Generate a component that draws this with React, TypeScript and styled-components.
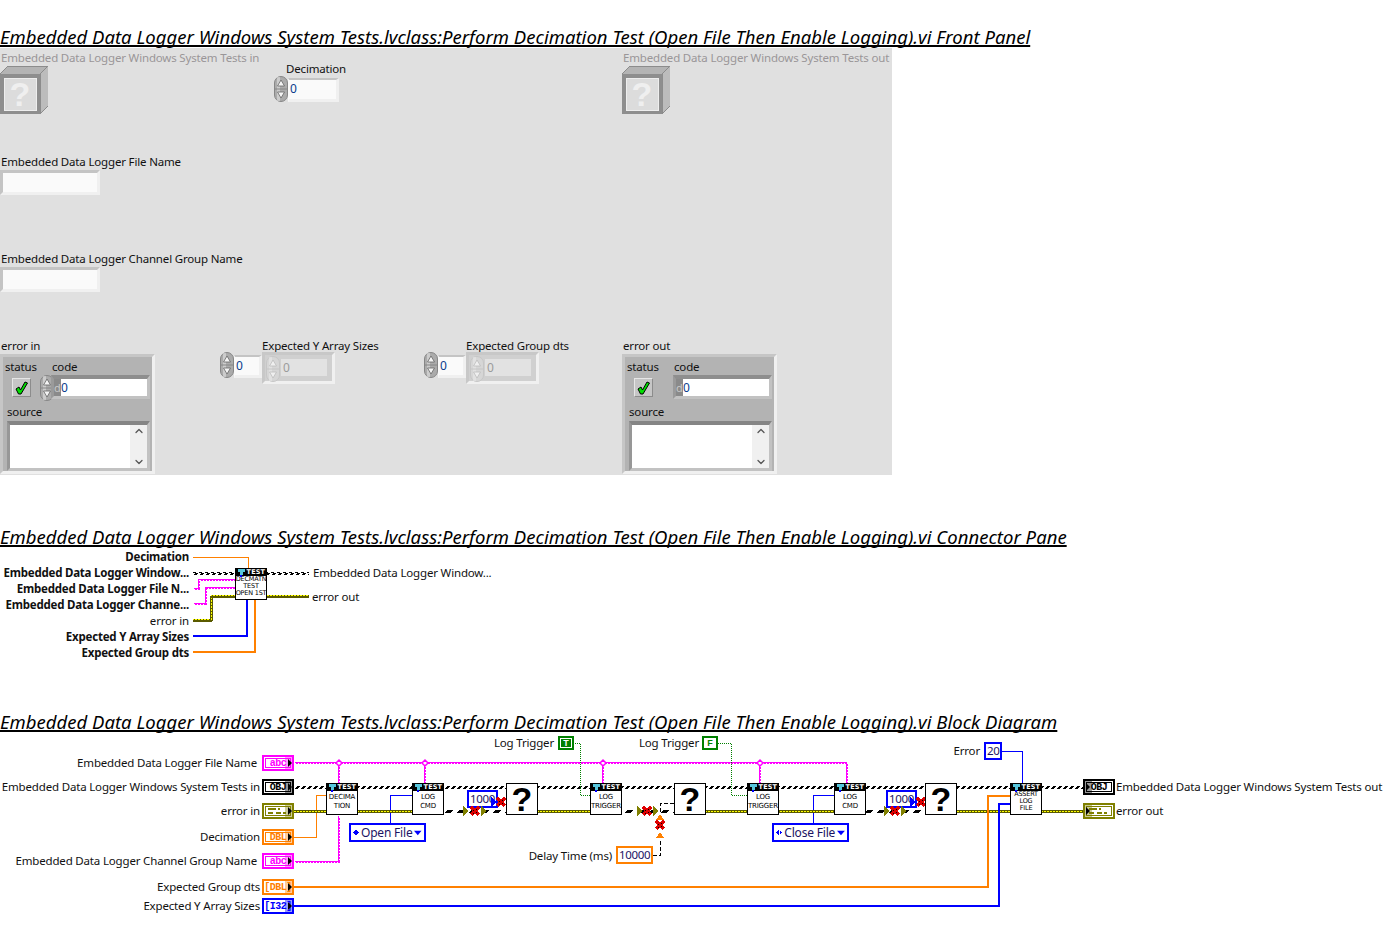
import React from "react";
import styled, { createGlobalStyle, css } from "styled-components";
import { ChevronDown, ChevronUp } from "lucide-react";

const GlobalStyle = createGlobalStyle`
  html, body {
    margin: 0;
    padding: 0;
    background: #fff;
  }
  body {
    font-family: "Noto Sans", "Liberation Sans", sans-serif;
    color: #111;
  }
`;

const MAGENTA = "#ff00ff";
const ORANGE = "#ff8000";
const BLUE = "#0000ff";
const GREEN = "#008000";
const OLIVE = "#808000";

const PANEL_TOP = 48;
const PANE_TOP = 549;
const DIAGRAM_TOP = 736;

type At = { $x: number; $y: number };

const placedIn = (origin: number) => css<At>`
  position: absolute;
  left: ${(p) => p.$x}px;
  top: ${(p) => p.$y - origin}px;
`;

const labelFont = css`
  font-size: 11.5px;
  letter-spacing: -0.17px;
  line-height: 16px;
  white-space: nowrap;
`;

const Page = styled.div`
  width: 1385px;
  height: 939px;
  padding-top: 27px;
  box-sizing: border-box;
  overflow: hidden;
`;

const Title = styled.h2<{ $gap?: number }>`
  margin: ${(p) => p.$gap ?? 0}px 0 0;
  height: 21px;
  font-family: "Noto Sans", sans-serif;
  font-size: 18.5px;
  font-style: italic;
  font-weight: 400;
  line-height: 20px;
  letter-spacing: 0.025px;
  white-space: nowrap;
  color: #000;
  text-decoration: underline;
  text-decoration-thickness: 2px;
  text-decoration-skip-ink: none;
  text-underline-offset: 1px;
`;

const FrontPanel = styled.div`
  position: relative;
  width: 892px;
  height: 427px;
  background: #e0e0e0;
  overflow: hidden;
`;

const ConnectorPane = styled.div`
  position: relative;
  height: 110px;
  margin-top: 1px;
`;

const BlockDiagram = styled.div`
  position: relative;
  height: 190px;
  margin-top: 3px;
`;

const WireLayer = styled.svg`
  position: absolute;
  inset: 0;
  width: 100%;
  height: 100%;
  shape-rendering: crispEdges;
`;

const Patterns = styled.svg`
  display: block;
  width: 0;
  height: 0;
`;

/* ---------- front panel ---------- */

const PanelLabel = styled.span<At & { $muted?: boolean }>`
  ${placedIn(PANEL_TOP)};
  ${labelFont};
  color: ${(p) => (p.$muted ? "#9a9698" : "#111")};
`;

const PanelItem = styled.div<At>`
  ${placedIn(PANEL_TOP)};
`;

const StringBox = styled.div`
  width: 100px;
  height: 25px;
  box-sizing: border-box;
  background: #fafafa;
  border-style: solid;
  border-width: 3px;
  border-color: #c4c4c4 #f0f0f0 #f0f0f0 #c4c4c4;
`;

const NumericRow = styled.div`
  display: flex;
  align-items: flex-start;
`;

const NumericBox = styled.div<{ $width: number; $height: number; $top: number }>`
  width: ${(p) => p.$width}px;
  height: ${(p) => p.$height}px;
  margin-top: ${(p) => p.$top}px;
  box-sizing: border-box;
  padding-left: 1px;
  background: #fafafa;
  border-style: solid;
  border-width: 2px 3px 3px 1px;
  border-color: #c4c4c4 #f0f0f0 #f0f0f0 #fafafa;
  font-size: 12px;
  line-height: 18px;
  color: #0b3c8c;
`;

const ArrayFrame = styled.div`
  display: flex;
  width: 73px;
  height: 32px;
  box-sizing: border-box;
  padding: 1px 5px 0 1px;
  background: #d0d0d0;
  border-style: solid;
  border-width: 3px;
  border-color: #c8c8c8 #f0f0f0 #f0f0f0 #c8c8c8;
`;

const ArrayElement = styled.div`
  width: 47px;
  height: 17px;
  margin: 3px 0 0 1px;
  padding-left: 2px;
  box-sizing: border-box;
  background: #e2e2e2;
  font-size: 12px;
  line-height: 18px;
  color: #9b9b9b;
`;

const Cluster = styled.div`
  width: 155px;
  height: 120px;
  box-sizing: border-box;
  padding: 2px 2px 0 2px;
  display: flex;
  flex-direction: column;
  background: #b3b3b3;
  border-style: solid;
  border-width: 3px;
  border-color: #c6c6c6 #f0f0f0 #f0f0f0 #c6c6c6;
`;

const ClusterTop = styled.div`
  display: grid;
  grid-template-columns: 33px 1fr;
  height: 45px;
`;

const ClusterText = styled.div<{ $indent: number }>`
  ${labelFont};
  margin-left: ${(p) => p.$indent}px;
  height: 16px;
  color: #111;
`;

const StatusLed = styled.div`
  width: 19px;
  height: 19px;
  margin: 3px 0 0 7px;
  box-sizing: border-box;
  display: flex;
  align-items: center;
  justify-content: center;
  background: #c6c6c6;
  border-style: solid;
  border-width: 1px;
  border-color: #e6e6e6 #8c8c8c #8c8c8c #e6e6e6;
`;

const CodeRow = styled.div<{ $indent: number }>`
  display: flex;
  align-items: flex-start;
  margin-left: ${(p) => p.$indent}px;
`;

const CodeBox = styled.div`
  display: flex;
  flex: none;
  width: 99px;
  height: 24px;
  margin-left: -3px;
  box-sizing: border-box;
  background: #fff;
  border-style: solid;
  border-width: 4px 3px 3px 3px;
  border-color: #8e8e8e #c2c2c2 #c2c2c2 #9a9a9a;
  font-size: 12px;
  line-height: 18px;
  color: #0b3c8c;
`;

const RadixTab = styled.span`
  width: 7px;
  background: #8a8a8a;
  color: #c8c8c8;
  font-size: 11px;
  line-height: 18px;
`;

const SourceBox = styled.div`
  display: flex;
  justify-content: flex-end;
  width: 143px;
  height: 51px;
  margin: 1px 0 0 2px;
  box-sizing: border-box;
  background: #fff;
  border-style: solid;
  border-width: 4px 3px 3px 3px;
  border-color: #858585 #c2c2c2 #c2c2c2 #979797;
`;

const ScrollTrack = styled.div`
  width: 17px;
  display: flex;
  flex-direction: column;
  align-items: center;
  justify-content: space-between;
  background: #f0f0f0;
  color: #555;
`;

const Spinner = ({ muted }: { muted?: boolean }) => {
  const shell = muted ? "#d6d6d6" : "#ababab";
  const edge = muted ? "#c6c6c6" : "#868686";
  const mark = muted ? "#efefef" : "#f4f4f4";
  const line = muted ? "#bdbdbd" : "#666";
  return (
    <svg width="14" height="26" viewBox="0 0 14 26" style={{ flex: "none" }}>
      <rect x="0.5" y="0.5" width="13" height="25" rx="6.5" fill={shell} stroke={edge} />
      <rect x="3" y="1" width="3" height="24" fill={mark} opacity="0.45" />
      <path d="M1 13h12" stroke={edge} />
      <path d="M7 4 L10.5 10 H3.5 Z" fill={mark} stroke={line} strokeWidth="0.8" />
      <path d="M7 22 L10.5 16 H3.5 Z" fill={mark} stroke={line} strokeWidth="0.8" />
    </svg>
  );
};

const CheckMark = () => (
  <svg width="13" height="14" viewBox="0 0 13 14">
    <path d="M1 8 L4 6 L5.5 9 L10 1 L12.5 2 L6 13 L3.5 13 Z" fill="#00e000" stroke="#000" strokeWidth="1" />
  </svg>
);

const ClassControl = () => (
  <svg width="48" height="48" viewBox="0 0 48 48" shapeRendering="crispEdges">
    <path d="M0 8 L8 0 H48 L40 8 Z" fill="#b4b4b4" stroke="#8c8c8c" />
    <path d="M40 8 L48 0 V40 L40 48 Z" fill="#bcbcbc" stroke="#8c8c8c" />
    <rect x="0" y="8" width="40" height="40" fill="#8e8e8e" />
    <rect x="4" y="12" width="32" height="32" fill="#dcdcdc" stroke="#eeeeee" />
    <text x="20" y="40" textAnchor="middle" fontFamily="Liberation Sans" fontWeight="700" fontSize="34" fill="#efefef">?</text>
  </svg>
);

const ErrorCluster = ({ label, x, input }: { label: string; x: number; input?: boolean }) => (
  <>
    <PanelLabel $x={x + 1} $y={338}>{label}</PanelLabel>
    <PanelItem $x={x} $y={354}>
      <Cluster>
        <ClusterTop>
          <div>
            <ClusterText $indent={0}>status</ClusterText>
            <StatusLed><CheckMark /></StatusLed>
          </div>
          <div>
            <ClusterText $indent={14}>code</ClusterText>
            <CodeRow $indent={input ? 2 : 16}>
              {input && <Spinner />}
              <CodeBox>
                <RadixTab>d</RadixTab>
                0
              </CodeBox>
            </CodeRow>
          </div>
        </ClusterTop>
        <ClusterText $indent={2}>source</ClusterText>
        <SourceBox>
          <ScrollTrack>
            <ChevronUp size={12} strokeWidth={2.5} />
            <ChevronDown size={12} strokeWidth={2.5} />
          </ScrollTrack>
        </SourceBox>
      </Cluster>
    </PanelItem>
  </>
);

const ArrayControl = ({ label, x }: { label: string; x: number }) => (
  <>
    <PanelLabel $x={x + 42} $y={338}>{label}</PanelLabel>
    <PanelItem $x={x} $y={352}>
      <NumericRow>
        <Spinner />
        <NumericBox $width={28} $height={23} $top={3}>0</NumericBox>
        <ArrayFrame>
          <Spinner muted />
          <ArrayElement>0</ArrayElement>
        </ArrayFrame>
      </NumericRow>
    </PanelItem>
  </>
);

/* ---------- wires ---------- */

const Line = ({ d, c, w = 1 }: { d: string; c: string; w?: number }) => (
  <path d={d} fill="none" stroke={c} strokeWidth={w} />
);

const ClassWire = ({ x1, x2, y }: { x1: number; x2: number; y: number }) => (
  <rect x={x1} y={y - 1} width={x2 - x1} height={3} fill="url(#classHatch)" />
);

const BrokenWire = ({ x1, x2, y }: { x1: number; x2: number; y: number }) => (
  <rect x={x1} y={y - 1} width={x2 - x1} height={3} fill="url(#brokenHatch)" />
);

const ErrorWire = ({ x1, x2, y }: { x1: number; x2: number; y: number }) => (
  <rect x={x1} y={y - 1} width={x2 - x1} height={3} fill="url(#errorHatch)" />
);

const ErrorRise = ({ x, y1, y2 }: { x: number; y1: number; y2: number }) => (
  <rect x={x - 1} y={y1} width={3} height={y2 - y1} fill="url(#errorRise)" />
);

// string wires read as a solid line with a row of dots beside it
const StringWire = ({ d }: { d: string }) => (
  <g transform="translate(0.5 0.5)">
    <path d={d} fill="none" stroke={MAGENTA} strokeWidth="1" />
    <path d={d} transform="translate(1 1)" fill="none" stroke={MAGENTA} strokeWidth="1" strokeDasharray="2 1" />
  </g>
);

const Junction = ({ x, y }: { x: number; y: number }) => (
  <path d={`M${x - 3} ${y} L${x} ${y - 3} L${x + 3} ${y} L${x} ${y + 3} Z`} fill="#fff" stroke={MAGENTA} strokeWidth="1.5" shapeRendering="auto" />
);

const Flow = ({ x, y, c, up }: { x: number; y: number; c: string; up?: boolean }) => (
  <polygon
    points={up ? `${x - 4},${y + 3} ${x + 4},${y + 3} ${x},${y - 3}` : `${x - 3},${y - 5} ${x - 3},${y + 5} ${x + 3},${y}`}
    fill={c}
  />
);

const Cross = ({ x, y }: { x: number; y: number }) => (
  <g>
    <path d={`M${x - 4} ${y - 4} L${x + 4} ${y + 4} M${x + 4} ${y - 4} L${x - 4} ${y + 4}`} stroke="#e00000" strokeWidth="3.5" fill="none" />
    <path d={`M${x - 2} ${y - 1} h1 M${x + 1} ${y + 1} h1 M${x + 1} ${y - 2} h1 M${x - 2} ${y + 2} h1`} stroke="#000" strokeWidth="1" fill="none" />
  </g>
);

const WirePatterns = () => (
  <Patterns aria-hidden="true">
    <defs>
      <pattern id="classHatch" width="6" height="3" patternUnits="userSpaceOnUse">
        <rect x="3" y="0" width="3" height="1" fill="#000" />
        <rect x="2" y="1" width="3" height="1" fill="#000" />
        <rect x="1" y="2" width="3" height="1" fill="#000" />
      </pattern>
      <pattern id="brokenHatch" width="12" height="3" patternUnits="userSpaceOnUse">
        <rect x="3" y="0" width="6" height="1" fill="#000" />
        <rect x="2" y="1" width="6" height="1" fill="#000" />
        <rect x="1" y="2" width="6" height="1" fill="#000" />
      </pattern>
      <pattern id="errorHatch" width="3" height="3" patternUnits="userSpaceOnUse">
        <rect width="3" height="3" fill="#5a5a00" />
        <rect x="0" y="1" width="2" height="1" fill="#ffff00" />
      </pattern>
      <pattern id="errorRise" width="3" height="3" patternUnits="userSpaceOnUse">
        <rect width="3" height="3" fill="#5a5a00" />
        <rect x="1" y="0" width="1" height="2" fill="#ffff00" />
      </pattern>
    </defs>
  </Patterns>
);

/* ---------- connector pane ---------- */

const PaneLabel = styled.span<At & { $bold?: boolean; $left?: boolean }>`
  ${placedIn(PANE_TOP)};
  ${labelFont};
  letter-spacing: ${(p) => (p.$bold ? -0.22 : -0.17)}px;
  font-weight: ${(p) => (p.$bold ? 700 : 400)};
  transform: translate(${(p) => (p.$left ? "0" : "-100%")}, -8px);
`;

const PanePlace = styled.div<At>`
  ${placedIn(PANE_TOP)};
`;

/* ---------- block diagram ---------- */

const DiagramLabel = styled.span<At & { $left?: boolean }>`
  ${placedIn(DIAGRAM_TOP)};
  ${labelFont};
  transform: translate(${(p) => (p.$left ? "0" : "-100%")}, -8px);
`;

const DiagramPlace = styled.div<At>`
  ${placedIn(DIAGRAM_TOP)};
`;

const ViFrame = styled.div`
  position: relative;
  width: 32px;
  height: 32px;
  box-sizing: border-box;
  background: #fff;
  border: 1px solid #000;
`;

const ViHeader = styled.div`
  height: 7px;
  padding-right: 1px;
  background: #000;
  color: #fff;
  font-family: "DejaVu Sans", sans-serif;
  font-size: 6.5px;
  font-weight: 700;
  line-height: 7px;
  text-align: right;
  letter-spacing: 0.1px;
`;

const ViCaption = styled.div<{ $tight?: boolean }>`
  display: flex;
  flex-direction: column;
  align-items: center;
  padding-top: ${(p) => (p.$tight ? 0 : 2)}px;
  font-family: "DejaVu Sans", sans-serif;
  font-size: ${(p) => (p.$tight ? 6.5 : 7)}px;
  line-height: ${(p) => (p.$tight ? 7 : 9)}px;
  letter-spacing: -0.2px;
  white-space: nowrap;
  color: #000;
`;

const ViTee = styled.svg`
  position: absolute;
  left: 2px;
  top: 0;
`;

const QuestionFrame = styled(ViFrame)`
  display: flex;
  align-items: center;
  justify-content: center;
  font-family: "Liberation Sans", sans-serif;
  font-size: 34px;
  font-weight: 700;
  line-height: 30px;
  color: #000;
`;

const Vi = ({ lines, tight }: { lines: string[]; tight?: boolean }) => (
  <ViFrame>
    <ViHeader>TEST</ViHeader>
    <ViTee width="7" height="9" viewBox="0 0 7 9" shapeRendering="crispEdges">
      <rect x="0" y="0" width="7" height="3" fill="#57c6dc" />
      <rect x="2" y="3" width="3" height="3" fill="#57c6dc" />
      <rect x="2" y="6" width="2" height="2" fill="#0000ff" />
    </ViTee>
    <ViCaption $tight={tight}>
      {lines.map((l) => (
        <span key={l}>{l}</span>
      ))}
    </ViCaption>
  </ViFrame>
);

const Terminal = styled.div<{ $color: string }>`
  position: relative;
  width: 32px;
  height: 16px;
  box-sizing: border-box;
  padding: 1px;
  background: #fff;
  border: 2px solid ${(p) => p.$color};
  color: ${(p) => p.$color};
`;

const TerminalFace = styled.div<{ $plain?: boolean }>`
  height: 100%;
  box-sizing: border-box;
  display: flex;
  align-items: center;
  justify-content: center;
  border: ${(p) => (p.$plain ? "none" : "1px solid currentColor")};
  font-family: "Liberation Mono", monospace;
  font-size: 10px;
  font-weight: 700;
  letter-spacing: -0.5px;
`;

const TerminalBand = styled.span<{ $out?: boolean }>`
  position: absolute;
  top: 0;
  bottom: 0;
  ${(p) => (p.$out ? "left: 0" : "right: 0")};
  width: 7px;
  background: currentColor;
  opacity: 0.4;
`;

const TerminalArrow = styled.span<{ $out?: boolean }>`
  position: absolute;
  top: 2px;
  ${(p) => (p.$out ? "left: 1px" : "right: 0")};
  border-style: solid;
  border-width: 4px 0 4px 4px;
  border-color: transparent transparent transparent #000;
`;

const ErrorGlyph = () => (
  <svg width="22" height="8" viewBox="0 0 22 8" shapeRendering="crispEdges">
    <rect x="1" y="1" width="8" height="2" fill={OLIVE} />
    <rect x="11" y="1" width="2" height="2" fill={OLIVE} />
    <rect x="1" y="5" width="5" height="2" fill={OLIVE} />
    <rect x="9" y="5" width="5" height="2" fill={OLIVE} />
    <rect x="16" y="5" width="3" height="2" fill={OLIVE} />
  </svg>
);

const Term = ({ color, text, out, plain, children }: { color: string; text?: string; out?: boolean; plain?: boolean; children?: React.ReactNode }) => (
  <Terminal $color={color}>
    <TerminalFace $plain={plain}>{children ?? text}</TerminalFace>
    <TerminalBand $out={out} />
    <TerminalArrow $out={out} />
  </Terminal>
);

const ConstBox = styled.div<{ $color: string; $width: number }>`
  width: ${(p) => p.$width}px;
  height: 18px;
  box-sizing: border-box;
  padding-left: 1px;
  background: #fff;
  border: 2px solid ${(p) => p.$color};
  font-size: 11.5px;
  line-height: 14px;
  letter-spacing: -0.3px;
  white-space: nowrap;
  color: #1b1464;
`;

const BoolBox = styled.div`
  width: 16px;
  height: 14px;
  box-sizing: border-box;
  padding: 1px;
  background: #fff;
  border: 2px solid ${GREEN};
`;

const BoolFace = styled.div<{ $on?: boolean }>`
  height: 100%;
  display: flex;
  align-items: center;
  justify-content: center;
  background: ${(p) => (p.$on ? GREEN : "#fff")};
  color: ${(p) => (p.$on ? "#fff" : GREEN)};
  font-family: "Liberation Sans", sans-serif;
  font-size: 9px;
  font-weight: 700;
`;

const EnumBox = styled.div`
  ${labelFont};
  font-size: 12px;
  letter-spacing: -0.2px;
  display: flex;
  align-items: center;
  gap: 2px;
  width: 77px;
  height: 19px;
  box-sizing: border-box;
  padding: 0 2px;
  background: #fff;
  border: 2px solid ${BLUE};
  color: #1b1464;
`;

const EnumText = styled.span`
  flex: 1;
`;

const EnumStep = () => (
  <svg width="8" height="7" viewBox="0 0 8 7" shapeRendering="crispEdges">
    <path d="M0 3.5 L3.5 0 V7 Z M4.5 0 L8 3.5 L4.5 7 Z" fill={BLUE} />
  </svg>
);

const EnumDrop = () => (
  <svg width="10" height="6" viewBox="0 0 10 6">
    <path d="M0 0 H10 L5 6 Z" fill={BLUE} />
  </svg>
);

const EnumConst = ({ text }: { text: string }) => (
  <EnumBox>
    <EnumStep />
    <EnumText>{text}</EnumText>
    <EnumDrop />
  </EnumBox>
);

const TERMINALS = [
  { y: 755, color: MAGENTA, text: "abc" },
  { y: 779, color: "#000", text: "OBJ" },
  { y: 829, color: ORANGE, text: "DBL" },
  { y: 853, color: MAGENTA, text: "abc" },
];

const DIAGRAM_LABELS = [
  { x: 257, y: 763, text: "Embedded Data Logger File Name" },
  { x: 260, y: 787, text: "Embedded Data Logger Windows System Tests in" },
  { x: 260, y: 811, text: "error in" },
  { x: 260, y: 837, text: "Decimation" },
  { x: 257, y: 861, text: "Embedded Data Logger Channel Group Name" },
  { x: 260, y: 887, text: "Expected Group dts" },
  { x: 260, y: 906, text: "Expected Y Array Sizes" },
  { x: 554, y: 743, text: "Log Trigger" },
  { x: 699, y: 743, text: "Log Trigger" },
  { x: 612, y: 856, text: "Delay Time (ms)" },
  { x: 980, y: 751, text: "Error" },
];

const VIS = [
  { x: 326, lines: ["DECIMA", "TION"] },
  { x: 412, lines: ["LOG", "CMD"] },
  { x: 590, lines: ["LOG", "TRIGGER"] },
  { x: 747, lines: ["LOG", "TRIGGER"] },
  { x: 834, lines: ["LOG", "CMD"] },
];

const QUESTIONS = [506, 674, 925];

const PaneWires = () => (
  <WireLayer viewBox={`0 ${PANE_TOP} 1385 110`} preserveAspectRatio="xMinYMin slice">
    <Line d="M193 557.5 H248.5 V568" c={ORANGE} />
    <ClassWire x1={193} x2={235} y={573} />
    <ClassWire x1={267} x2={309} y={573} />
    <StringWire d="M193 588 H198 V579 H235" />
    <StringWire d="M193 603 H205 V587 H235" />
    <ErrorWire x1={193} x2={212} y={620} />
    <ErrorRise x={211} y1={596} y2={621} />
    <ErrorWire x1={211} x2={235} y={596} />
    <ErrorWire x1={267} x2={309} y={596} />
    <Line d="M193 636 H247 V600" c={BLUE} w={2} />
    <Line d="M193 652 H255 V600" c={ORANGE} w={2} />
  </WireLayer>
);

const DiagramWires = () => (
  <WireLayer viewBox={`0 ${DIAGRAM_TOP} 1385 190`} preserveAspectRatio="xMinYMin slice">
    <ClassWire x1={294} x2={1083} y={787} />

    <StringWire d="M294 762 H846 V783" />
    <StringWire d="M338 762 V783" />
    <StringWire d="M424 762 V783" />
    <StringWire d="M602 762 V783" />
    <StringWire d="M759 762 V783" />
    <StringWire d="M294 861 H338 V815" />
    {[339, 425, 603, 760].map((x) => (
      <Junction key={x} x={x} y={763} />
    ))}

    <Line d="M294 837.5 H316.5 V795.5 H326" c={ORANGE} />
    <Line d="M390.5 823 V795.5 H412" c={BLUE} />
    <Line d="M813.5 823 V795.5 H834" c={BLUE} />

    <ErrorWire x1={294} x2={326} y={811} />
    <ErrorWire x1={358} x2={412} y={811} />
    <ErrorWire x1={538} x2={590} y={811} />
    <ErrorWire x1={706} x2={747} y={811} />
    <ErrorWire x1={779} x2={834} y={811} />
    <ErrorWire x1={957} x2={1010} y={811} />
    <ErrorWire x1={1042} x2={1083} y={811} />

    <BrokenWire x1={444} x2={506} y={811} />
    <BrokenWire x1={622} x2={674} y={811} />
    <BrokenWire x1={866} x2={925} y={811} />

    <Flow x={466} y={811} c={OLIVE} />
    <Cross x={475} y={811} />
    <Flow x={484} y={811} c={OLIVE} />
    <Flow x={640} y={811} c={OLIVE} />
    <Cross x={647} y={811} />
    <Flow x={656} y={811} c={OLIVE} />
    <Flow x={887} y={811} c={OLIVE} />
    <Cross x={895} y={811} />
    <Flow x={904} y={811} c={OLIVE} />

    <Flow x={494} y={802} c={BLUE} />
    <Cross x={501} y={802} />
    <Flow x={510} y={802} c={BLUE} />
    <Flow x={913} y={802} c={BLUE} />
    <Cross x={921} y={802} />
    <Flow x={929} y={802} c={BLUE} />

    <path d="M660.5 812 V803.5 H674" fill="none" stroke="#000" strokeDasharray="4 2" />
    <Flow x={660} y={817} c={ORANGE} up />
    <Cross x={660} y={825} />
    <Flow x={660} y={835} c={ORANGE} up />
    <path d="M653 855.5 H660.5 V839" fill="none" stroke="#000" strokeDasharray="4 2" />

    <path d="M573 743.5 H580.5 V795.5 H590" fill="none" stroke={GREEN} strokeDasharray="1 1" />
    <path d="M718 743.5 H731.5 V795.5 H747" fill="none" stroke={GREEN} strokeDasharray="1 1" />

    <Line d="M294 887 H988 V796 H1010" c={ORANGE} w={2} />
    <Line d="M294 906 H999 V804 H1010" c={BLUE} w={2} />
    <Line d="M1001 751.5 H1022.5 V783" c={BLUE} />
  </WireLayer>
);

const App = () => (
  <Page>
    <GlobalStyle />
    <WirePatterns />

    <Title>Embedded Data Logger Windows System Tests.lvclass:Perform Decimation Test (Open File Then Enable Logging).vi Front Panel</Title>
    <FrontPanel>
      <PanelLabel $x={1} $y={50} $muted>Embedded Data Logger Windows System Tests in</PanelLabel>
      <PanelItem $x={0} $y={66}><ClassControl /></PanelItem>

      <PanelLabel $x={286} $y={61}>Decimation</PanelLabel>
      <PanelItem $x={274} $y={76}>
        <NumericRow>
          <Spinner />
          <NumericBox $width={51} $height={24} $top={2}>0</NumericBox>
        </NumericRow>
      </PanelItem>

      <PanelLabel $x={623} $y={50} $muted>Embedded Data Logger Windows System Tests out</PanelLabel>
      <PanelItem $x={622} $y={66}><ClassControl /></PanelItem>

      <PanelLabel $x={1} $y={154}>Embedded Data Logger File Name</PanelLabel>
      <PanelItem $x={0} $y={170}><StringBox /></PanelItem>

      <PanelLabel $x={1} $y={251}>Embedded Data Logger Channel Group Name</PanelLabel>
      <PanelItem $x={0} $y={267}><StringBox /></PanelItem>

      <ErrorCluster label="error in" x={0} input />
      <ArrayControl label="Expected Y Array Sizes" x={220} />
      <ArrayControl label="Expected Group dts" x={424} />
      <ErrorCluster label="error out" x={622} />
    </FrontPanel>

    <Title $gap={52}>Embedded Data Logger Windows System Tests.lvclass:Perform Decimation Test (Open File Then Enable Logging).vi Connector Pane</Title>
    <ConnectorPane>
      <PaneWires />
      <PaneLabel $x={189} $y={557} $bold>Decimation</PaneLabel>
      <PaneLabel $x={189} $y={573} $bold>Embedded Data Logger Window...</PaneLabel>
      <PaneLabel $x={189} $y={589} $bold>Embedded Data Logger File N...</PaneLabel>
      <PaneLabel $x={189} $y={605} $bold>Embedded Data Logger Channe...</PaneLabel>
      <PaneLabel $x={189} $y={621}>error in</PaneLabel>
      <PaneLabel $x={189} $y={637} $bold>Expected Y Array Sizes</PaneLabel>
      <PaneLabel $x={189} $y={653} $bold>Expected Group dts</PaneLabel>
      <PaneLabel $x={313} $y={573} $left>Embedded Data Logger Window...</PaneLabel>
      <PaneLabel $x={312} $y={597} $left>error out</PaneLabel>
      <PanePlace $x={235} $y={568}>
        <Vi lines={["DECMATN", "TEST", "OPEN 1ST"]} tight />
      </PanePlace>
    </ConnectorPane>

    <Title $gap={53}>Embedded Data Logger Windows System Tests.lvclass:Perform Decimation Test (Open File Then Enable Logging).vi Block Diagram</Title>
    <BlockDiagram>
      <DiagramPlace $x={467} $y={790}><ConstBox $color={BLUE} $width={31}>1000</ConstBox></DiagramPlace>
      <DiagramPlace $x={886} $y={790}><ConstBox $color={BLUE} $width={31}>1000</ConstBox></DiagramPlace>

      <DiagramWires />

      {DIAGRAM_LABELS.map((l) => (
        <DiagramLabel key={`${l.text}${l.x}`} $x={l.x} $y={l.y}>{l.text}</DiagramLabel>
      ))}
      <DiagramLabel $x={1116} $y={787} $left>Embedded Data Logger Windows System Tests out</DiagramLabel>
      <DiagramLabel $x={1116} $y={811} $left>error out</DiagramLabel>

      {TERMINALS.map((t) => (
        <DiagramPlace key={t.y} $x={262} $y={t.y}>
          <Term color={t.color} text={t.text} />
        </DiagramPlace>
      ))}
      <DiagramPlace $x={262} $y={803}>
        <Term color={OLIVE}><ErrorGlyph /></Term>
      </DiagramPlace>
      <DiagramPlace $x={262} $y={879}>
        <Term color={ORANGE} text="[DBL]" plain />
      </DiagramPlace>
      <DiagramPlace $x={262} $y={898}>
        <Term color={BLUE} text="[I32]" plain />
      </DiagramPlace>
      <DiagramPlace $x={1083} $y={779}>
        <Term color="#000" text="OBJ" out />
      </DiagramPlace>
      <DiagramPlace $x={1083} $y={803}>
        <Term color={OLIVE} out><ErrorGlyph /></Term>
      </DiagramPlace>

      {VIS.map((v) => (
        <DiagramPlace key={v.x} $x={v.x} $y={783}>
          <Vi lines={v.lines} />
        </DiagramPlace>
      ))}
      <DiagramPlace $x={1010} $y={783}>
        <Vi lines={["ASSERT", "LOG", "FILE"]} tight />
      </DiagramPlace>
      {QUESTIONS.map((x) => (
        <DiagramPlace key={x} $x={x} $y={783}>
          <QuestionFrame>?</QuestionFrame>
        </DiagramPlace>
      ))}

      <DiagramPlace $x={616} $y={846}><ConstBox $color={ORANGE} $width={37}>10000</ConstBox></DiagramPlace>
      <DiagramPlace $x={984} $y={742}><ConstBox $color={BLUE} $width={18}>20</ConstBox></DiagramPlace>

      <DiagramPlace $x={558} $y={736}>
        <BoolBox><BoolFace $on>T</BoolFace></BoolBox>
      </DiagramPlace>
      <DiagramPlace $x={702} $y={736}>
        <BoolBox><BoolFace>F</BoolFace></BoolBox>
      </DiagramPlace>

      <DiagramPlace $x={349} $y={823}><EnumConst text="Open File" /></DiagramPlace>
      <DiagramPlace $x={772} $y={823}><EnumConst text="Close File" /></DiagramPlace>
    </BlockDiagram>
  </Page>
);

export default App;
